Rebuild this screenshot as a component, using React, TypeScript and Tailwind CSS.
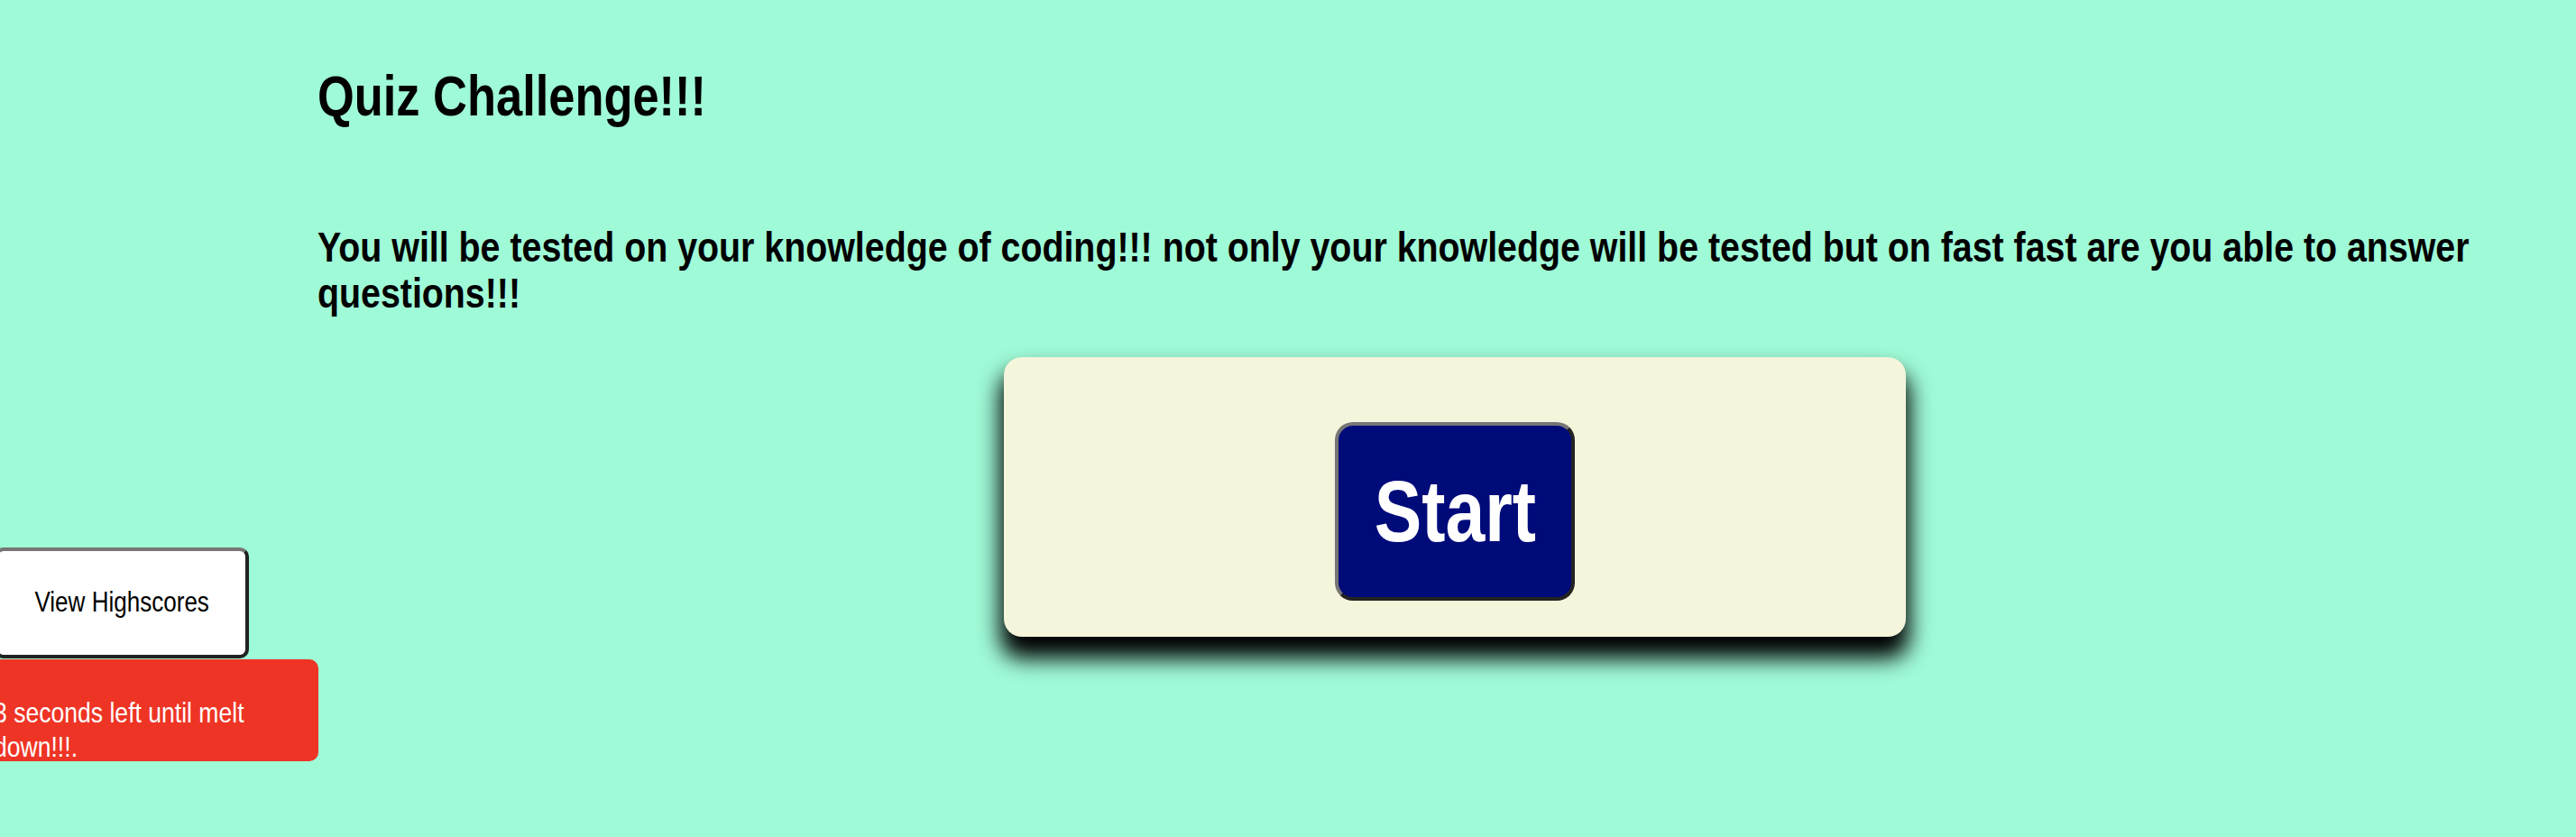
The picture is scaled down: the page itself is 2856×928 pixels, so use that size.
const sans = "font-['Liberation_Sans','Arial',sans-serif]";

export default function App() {
  return (
    <div className={`min-h-screen w-full overflow-hidden bg-[#9ffad7] flex text-black ${sans}`}>
      <aside className="w-[352px] shrink-0 pt-[607px] flex flex-col gap-[1px]">
        <button className="ml-[-6px] w-[282px] h-[123px] bg-white rounded-[10px] border-4 border-t-[#767676] border-l-[#767676] border-b-[#222222] border-r-[#222222] flex items-center justify-center">
          <span className="inline-block text-[31px] scale-x-[0.84]">View Highscores</span>
        </button>
        <div className="ml-[-20px] w-[373px] h-[113px] bg-[#ee3424] rounded-[10px] pt-[40px] pl-[13px] text-white">
          <div className="w-[400px] origin-left scale-x-[0.83] text-[32px] leading-[38px]">
            3 seconds left until melt down!!!.
          </div>
        </div>
      </aside>

      <main className="flex-1 min-w-0 pt-[70px]">
        <h1 className="origin-left scale-x-[0.832] text-[63px] font-bold leading-[72px] whitespace-nowrap">
          Quiz Challenge!!!
        </h1>
        <p className="mt-[107px] w-[3000px] origin-left scale-x-[0.855] text-[46px] font-bold leading-[51px]">
          You will be tested on your knowledge of coding!!! not only your knowledge will be tested but on fast fast
          are you able to answer questions!!!
        </p>

        <div className="mt-[45px] ml-[761px] w-[1000px] h-[310px] bg-[#f5f5dc] rounded-[20px] shadow-[0_20px_24px_4px_#000] flex justify-center pt-[72px]">
          <button className="w-[266px] h-[198px] bg-[#000b7a] rounded-[20px] border-4 border-t-[#767676] border-l-[#767676] border-b-[#222222] border-r-[#222222] flex items-center justify-center text-white">
            <span className="inline-block scale-x-[0.82] text-[96px] font-bold leading-none">Start</span>
          </button>
        </div>
      </main>
    </div>
  );
}
